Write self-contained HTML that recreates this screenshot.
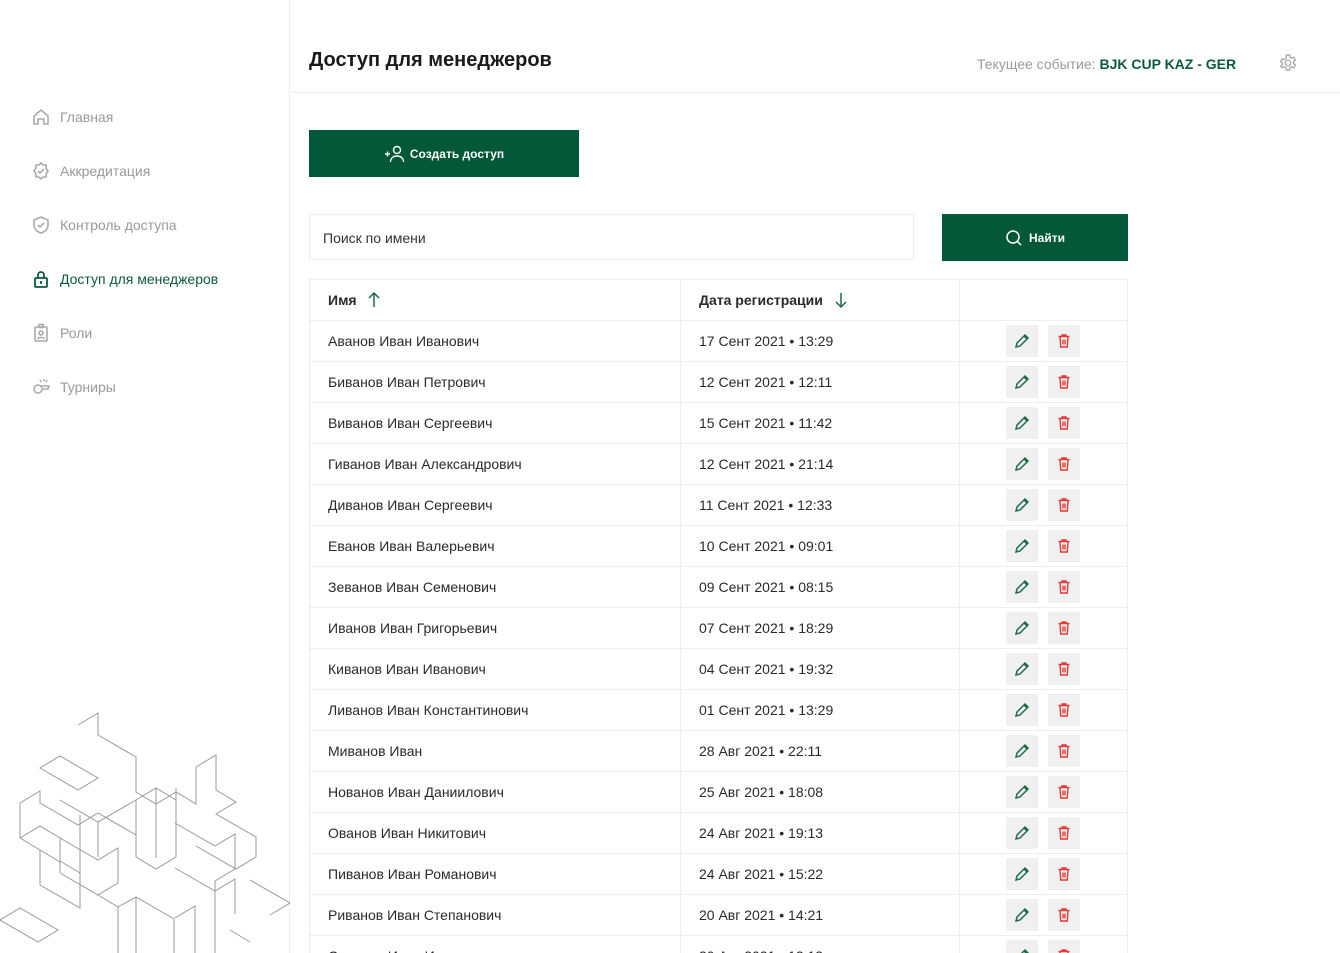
<!DOCTYPE html>
<html><head><meta charset="utf-8"><style>
*{box-sizing:border-box;margin:0;padding:0}
html,body{width:1340px;height:953px;overflow:hidden}
body{background:#fff;font-family:"Liberation Sans","DejaVu Sans",sans-serif;color:#222;position:relative}
.side{position:absolute;left:0;top:0;width:290px;height:953px;border-right:1px solid #eee}
.nav{position:absolute;left:31px;display:flex;align-items:center;font-size:14px;color:#9a9a9a}
.nav svg{width:20px;height:20px;margin-right:9px}
.nav.act{color:#0b5a3b}
.hdr{position:absolute;left:291px;top:0;right:0;height:93px;border-bottom:1px solid #eee}
h1{position:absolute;left:309px;top:49px;font-size:20px;font-weight:bold;color:#1a1a1a}
.ev{position:absolute;left:977px;top:56px;font-size:14px;color:#9a9a9a}
.ev b{color:#0b5a3b}
.btn{position:absolute;background:#04583a;color:#fff;font-size:12px;font-weight:bold;display:flex;align-items:center;justify-content:center}
.inp{position:absolute;left:309px;top:214px;width:605px;height:46px;border:1px solid #eee;font-size:14px;padding:15px 13px;color:#333}
table{position:absolute;left:309px;top:279px;width:819px;border-collapse:collapse;font-size:14px}
td,th{border:1px solid #eee;height:41px;padding:0 18px;text-align:left;color:#2a2a2a;font-weight:normal}
th{font-weight:bold;font-size:14px}
td.a{padding:0}
.ab{display:inline-block;width:32px;height:32px;background:#f0f0f0;vertical-align:middle;position:relative}
.ab svg{position:absolute;left:8px;top:8px}
.arr{vertical-align:middle;margin-left:8px;margin-top:-3px}
</style></head><body>
<div class="side">
<div class="nav" style="top:107px"><svg viewBox="0 0 20 20" fill="none" stroke="#aaa" stroke-width="1.6"><path d="M3 9l7-6 7 6v8h-4v-5H7v5H3z"/></svg>Главная</div>
<div class="nav" style="top:161px"><svg viewBox="0 0 20 20" fill="none" stroke="#aaa" stroke-width="1.6"><path d="M10 2l2 2h3v3l2 3-2 3v3h-3l-2 2-2-2H5v-3l-2-3 2-3V4h3z"/><path d="M7 10l2 2 4-4"/></svg>Аккредитация</div>
<div class="nav" style="top:215px"><svg viewBox="0 0 20 20" fill="none" stroke="#aaa" stroke-width="1.6"><path d="M10 2l7 3v5c0 4-3 7-7 8-4-1-7-4-7-8V5z"/><path d="M7 10l2 2 4-4"/></svg>Контроль доступа</div>
<div class="nav act" style="top:269px"><svg viewBox="0 0 20 20" fill="none" stroke="#0b5a3b" stroke-width="1.8"><rect x="4" y="9" width="12" height="9" rx="1"/><path d="M7 9V6a3 3 0 016 0v3M10 12v3"/></svg>Доступ для менеджеров</div>
<div class="nav" style="top:323px"><svg viewBox="0 0 20 20" fill="none" stroke="#aaa" stroke-width="1.6"><rect x="4" y="4" width="12" height="14" rx="1"/><rect x="8" y="1.5" width="4" height="3"/><circle cx="10" cy="10" r="2"/><path d="M6.5 16c1-2 6-2 7 0"/></svg>Роли</div>
<div class="nav" style="top:377px"><svg viewBox="0 0 20 20" fill="none" stroke="#aaa" stroke-width="1.6"><circle cx="7" cy="12" r="4"/><path d="M10 9h8l-1 3h-5M9 3l1 2M13 2v2M16 3l-1 2"/></svg>Турниры</div>
<svg style="position:absolute;left:0;top:700px" width="290" height="253" viewBox="0 0 290 253" fill="none" stroke="#999" stroke-width="1">
<path d="M78 25l20-12v22l38 22v35l20 12 20-12 20 12V67l20-12v35l20 12-20 12 40 23v20l-20 12-40-23"/>
<path d="M40 68l20-12 38 22-20 12zM20 103l20-12v12l38 22 20-12 38 22v-35M20 103v35l20 12v35l40 23v-35l-20-12"/>
<path d="M60 100l38 22 38-22M98 122v35M136 100v57l20 12 20-12v-35M175 123l40 23 20-12v35l-20 12v70M136 100l20-12 20 12M156 88v70"/>
<path d="M20 138l20-12 20 12 38 22 20-12v35l-20 12-38-22M60 138v35M0 220l20-12 38 22-20 12zM98 195l20 12v46M118 207l18-10 38 22v34M136 197v56M175 218l20-12v47"/>
<path d="M175 168l40 23 20-12v35M215 191v62M250 180l40 23M270 215l20-12M230 230l20 12"/>
<path d="M40 150l20 12M80 115v70M176 88v40"/>
</svg>
</div>
<div class="hdr"></div>
<h1>Доступ для менеджеров</h1>
<div class="ev">Текущее событие: <b>BJK CUP KAZ - GER</b></div>
<svg style="position:absolute;left:1278px;top:53px" width="20" height="20" viewBox="0 0 20 20" fill="none" stroke="#aaa" stroke-width="1.4"><path d="M8.5 2h3l.5 2.3 1.6.9 2.2-.8 1.5 2.6-1.7 1.6v1.8l1.7 1.6-1.5 2.6-2.2-.8-1.6.9-.5 2.3h-3l-.5-2.3-1.6-.9-2.2.8L2.7 13.4l1.7-1.6V10L2.7 8.4l1.5-2.6 2.2.8L8 5.7z"/><circle cx="10" cy="10" r="2.7"/></svg>
<div class="btn" style="left:309px;top:130px;width:270px;height:47px"><svg width="22" height="18" viewBox="0 0 22 18" fill="none" stroke="#fff" stroke-width="1.4" style="margin-right:4px"><path d="M1 9h5M3.5 6.5v5"/><circle cx="13" cy="5" r="3.5"/><path d="M6.5 17c0-4 3-6 6.5-6s6.5 2 6.5 6"/></svg>Создать доступ</div>
<div class="inp">Поиск по имени</div>
<div class="btn" style="left:942px;top:214px;width:186px;height:47px"><svg width="18" height="18" viewBox="0 0 18 18" fill="none" stroke="#fff" stroke-width="1.5" style="margin-right:6px"><circle cx="8" cy="8" r="6"/><path d="M12.5 12.5L16 16"/></svg>Найти</div>
<table>
<tr><th style="width:371px">Имя <svg class="arr" width="12" height="16" viewBox="0 0 12 16" fill="none" stroke="#1f6b47" stroke-width="1.5"><path d="M6 15V1M1 6l5-5 5 5"/></svg></th><th style="width:279px">Дата регистрации <svg class="arr" width="12" height="16" viewBox="0 0 12 16" fill="none" stroke="#1f6b47" stroke-width="1.5"><path d="M6 1v14M1 10l5 5 5-5"/></svg></th><th></th></tr>
</table>
<script>
var r=[["Аванов Иван Иванович","17 Сент 2021 • 13:29"],["Биванов Иван Петрович","12 Сент 2021 • 12:11"],["Виванов Иван Сергеевич","15 Сент 2021 • 11:42"],["Гиванов Иван Александрович","12 Сент 2021 • 21:14"],["Диванов Иван Сергеевич","11 Сент 2021 • 12:33"],["Еванов Иван Валерьевич","10 Сент 2021 • 09:01"],["Зеванов Иван Семенович","09 Сент 2021 • 08:15"],["Иванов Иван Григорьевич","07 Сент 2021 • 18:29"],["Киванов Иван Иванович","04 Сент 2021 • 19:32"],["Ливанов Иван Константинович","01 Сент 2021 • 13:29"],["Миванов Иван","28 Авг 2021 • 22:11"],["Нованов Иван Даниилович","25 Авг 2021 • 18:08"],["Ованов Иван Никитович","24 Авг 2021 • 19:13"],["Пиванов Иван Романович","24 Авг 2021 • 15:22"],["Риванов Иван Степанович","20 Авг 2021 • 14:21"],["Сиванов Иван Иванович","20 Авг 2021 • 12:13"]];
var pen='<svg width="16" height="16" viewBox="0 0 16 16" fill="none" stroke="#1f6b47" stroke-width="1.5"><path d="M2 14l1-4 8-8 3 3-8 8z M10 3l3 3"/></svg>';
var bin='<svg width="16" height="16" viewBox="0 0 16 16" fill="none" stroke="#e53935" stroke-width="1.4"><path d="M2.5 3.5h11M6 3.5V2h4v1.5M4 3.5l.7 10.5h6.6L12 3.5M7 6.5v5M9 6.5v5"/></svg>';
var h='';r.forEach(function(x){h+='<tr><td>'+x[0]+'</td><td>'+x[1]+'</td><td class="a"><span class="ab" style="margin-left:46px">'+pen+'</span><span class="ab" style="margin-left:10px">'+bin+'</span></td></tr>';});
document.querySelector('table').insertAdjacentHTML('beforeend',h);
</script>
</body></html>
